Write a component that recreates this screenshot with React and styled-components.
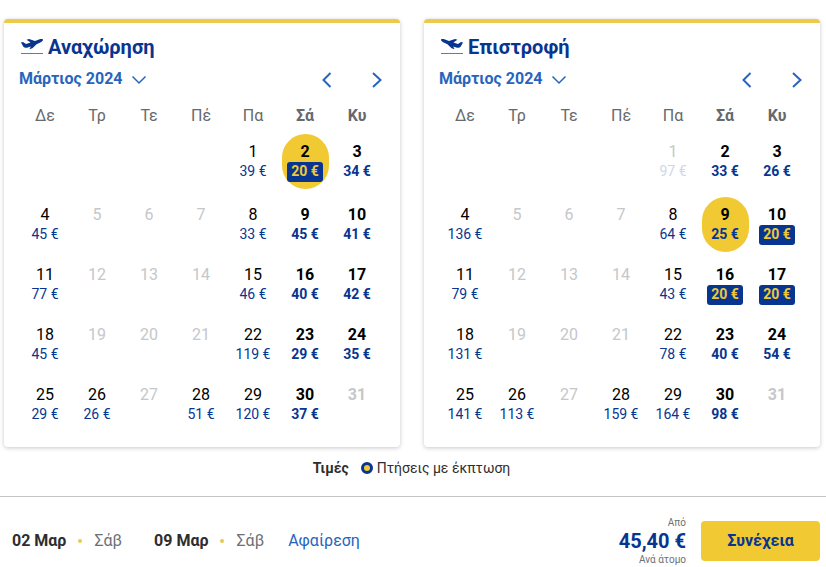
import React from "react";
import styled, { createGlobalStyle } from "styled-components";

const navy = "#073590";
const blue = "#2765bd";
const yellow = "#f1c933";

const GlobalStyle = createGlobalStyle`
  *, *::before, *::after { box-sizing: border-box; }
  body {
    margin: 0;
    background: #fff;
    color: #2e2e2e;
    font-family: Roboto, "Liberation Sans", sans-serif;
  }
  button { font-family: inherit; border: 0; padding: 0; background: none; cursor: pointer; }
`;

const Calendars = styled.div`
  display: grid;
  grid-template-columns: 1fr 1fr;
  gap: 24px;
  padding: 19px 6px 0 4px;
`;

const Card = styled.section`
  padding: 12px 17px 10px 15px;
  border-top: 4px solid #edca4a;
  border-radius: 4px;
  background: #fff;
  box-shadow: 0 1px 4px rgba(0, 0, 0, 0.22);
`;

const Heading = styled.h2`
  display: flex;
  align-items: center;
  gap: 5px;
  margin: 0;
  padding-left: 2px;
  font-size: 20px;
  line-height: 24px;
  font-weight: 700;
  color: ${navy};
`;

const MonthBar = styled.div`
  display: flex;
  align-items: center;
  justify-content: space-between;
  height: 40px;
`;

const MonthButton = styled.button`
  display: flex;
  align-items: center;
  gap: 8px;
  font-size: 16px;
  line-height: 24px;
  font-weight: 700;
  color: ${blue};
`;

const Arrows = styled.div`
  display: flex;
  gap: 34px;
  padding-top: 2px;
`;

const ArrowButton = styled.button`
  display: flex;
  width: 16px;
  height: 16px;
  color: ${blue};
`;

const Month = styled.table`
  width: 100%;
  table-layout: fixed;
  border-collapse: collapse;
`;

const Weekday = styled.th`
  height: 35px;
  padding: 0 0 1px;
  vertical-align: middle;
  font-size: 16px;
  line-height: 24px;
  font-weight: ${(p) => (p.$weekend ? 700 : 400)};
  color: #66696d;
`;

const Cell = styled.td`
  height: ${(p) => (p.$first ? 63 : 60)}px;
  padding: 0;
  text-align: center;
  vertical-align: top;
`;

const DayButton = styled.button`
  display: inline-flex;
  flex-direction: column;
  align-items: center;
  width: 47px;
  height: 55px;
  padding-top: 8px;
  border-radius: 24px;
  background: ${(p) => (p.$selected ? yellow : "transparent")};
  font-size: 16px;
  line-height: 20px;
  font-weight: ${(p) => (p.$weekend ? 700 : 400)};
  color: #000;
  &:disabled { color: #c5c7ca; cursor: default; }
`;

const Price = styled.span`
  padding: 0 4px 2px;
  border-radius: 3px;
  font-size: 14px;
  line-height: 18px;
  white-space: nowrap;
  background: ${(p) => (p.$deal ? navy : "transparent")};
  color: ${(p) => (p.$deal ? yellow : navy)};
  button:disabled & { color: #cdd7e9; }
`;

const Legend = styled.div`
  display: flex;
  justify-content: center;
  align-items: center;
  gap: 12px;
  padding: 11px 3px 18px 0;
  font-size: 14px;
  line-height: 20px;
`;

const LegendItem = styled.span`
  display: flex;
  align-items: center;
  gap: 4px;
`;

const DealDot = styled.span`
  width: 12px;
  height: 12px;
  border: 3px solid ${navy};
  border-radius: 50%;
  background: ${yellow};
`;

const Footer = styled.footer`
  display: flex;
  align-items: center;
  justify-content: space-between;
  padding: 18px 6px 0 12px;
  border-top: 1px solid #c4c4c4;
`;

const Trip = styled.div`
  display: flex;
  align-items: center;
  font-size: 16px;
  line-height: 24px;
`;

const TripDate = styled.div`
  display: flex;
  align-items: center;
  gap: 12px;
  margin-right: ${(p) => (p.$last ? 24 : 32)}px;
  color: #6b7076;
  strong { color: #2e2e2e; }
`;

const Bullet = styled.span`
  width: 4px;
  height: 4px;
  border-radius: 50%;
  background: #e5cb4d;
`;

const RemoveLink = styled.a`
  color: ${blue};
  text-decoration: none;
`;

const Checkout = styled.div`
  display: flex;
  align-items: center;
  gap: 15px;
`;

const Total = styled.div`
  display: flex;
  flex-direction: column;
  align-items: flex-end;
  padding-top: 2px;
  font-size: 10px;
  line-height: 12px;
  color: #6b7076;
  strong { font-size: 20px; line-height: 25px; color: ${navy}; }
`;

const Continue = styled.button`
  width: 119px;
  height: 40px;
  border-radius: 4px;
  background: ${yellow};
  font-size: 16px;
  line-height: 24px;
  font-weight: 700;
  color: ${navy};
`;

function Chevron({ direction }) {
  const paths = {
    down: "M1.5 5.5 L8 12 L14.5 5.5",
    left: "M13.5 1 L6.5 8 L13.5 15",
    right: "M6 1 L13.5 8 L6 15",
  };
  return (
    <svg width="16" height="16" viewBox="0 0 16 16" fill="none" aria-hidden="true">
      <path d={paths[direction]} stroke="currentColor" strokeWidth={direction === "down" ? 1.5 : 2} />
    </svg>
  );
}

function Plane({ landing }) {
  return (
    <svg width="22" height="18" viewBox="0 0 22 18" aria-hidden="true">
      <g transform={landing ? "translate(22 0) scale(-1 1)" : undefined}>
        <path
          fill="currentColor"
          d="M0 4.6 L2 4.1 L5 6 L9.6 4.5 L5.6 1.7 L8 .9 L14 2.9 L18 1.4 C19.8 .8 21.8 .8 22 1.6 C22.2 2.8 20.8 3.7 19.3 4.5 L15.6 6.2 L11.4 10.3 L8.4 11.2 L9.8 8.5 L6 9.7 C4.4 10.1 3.4 9.8 2.4 8.8 Z"
        />
      </g>
      <path d="M0 15.5 H22" stroke="#5f7da6" strokeWidth="1" />
    </svg>
  );
}

const weekdays = ["Δε", "Τρ", "Τε", "Πέ", "Πα", "Σά", "Κυ"];

const outbound = {
  title: "Αναχώρηση",
  selected: 2,
  prices: {
    1: 39, 2: 20, 3: 34, 4: 45, 8: 33, 9: 45, 10: 41, 11: 77, 15: 46, 16: 40, 17: 42,
    18: 45, 22: 119, 23: 29, 24: 35, 25: 29, 26: 26, 28: 51, 29: 120, 30: 37,
  },
  soldOut: [],
};

const inbound = {
  title: "Επιστροφή",
  landing: true,
  selected: 9,
  prices: {
    1: 97, 2: 33, 3: 26, 4: 136, 8: 64, 9: 25, 10: 20, 11: 79, 15: 43, 16: 20, 17: 20,
    18: 131, 22: 78, 23: 40, 24: 54, 25: 141, 26: 113, 28: 159, 29: 164, 30: 98,
  },
  soldOut: [1],
};

const weeks = [0, 1, 2, 3, 4].map((w) =>
  weekdays.map((_, d) => w * 7 + d - 3)
);

function Calendar({ data }) {
  return (
    <Card>
      <Heading>
        <Plane landing={data.landing} />
        {data.title}
      </Heading>
      <MonthBar>
        <MonthButton type="button">
          Μάρτιος 2024
          <Chevron direction="down" />
        </MonthButton>
        <Arrows>
          <ArrowButton type="button" aria-label="Προηγούμενος μήνας"><Chevron direction="left" /></ArrowButton>
          <ArrowButton type="button" aria-label="Επόμενος μήνας"><Chevron direction="right" /></ArrowButton>
        </Arrows>
      </MonthBar>
      <Month>
        <thead>
          <tr>
            {weekdays.map((name, i) => (
              <Weekday key={name} scope="col" $weekend={i > 4}>{name}</Weekday>
            ))}
          </tr>
        </thead>
        <tbody>
          {weeks.map((week, w) => (
            <tr key={w}>
              {week.map((day, d) => {
                const price = data.prices[day];
                return (
                  <Cell key={d} $first={w === 0}>
                    {day > 0 && (
                      <DayButton
                        type="button"
                        disabled={!price || data.soldOut.includes(day)}
                        aria-pressed={day === data.selected}
                        $selected={day === data.selected}
                        $weekend={d > 4}
                      >
                        {day}
                        {price && <Price $deal={price === 20}>{price} €</Price>}
                      </DayButton>
                    )}
                  </Cell>
                );
              })}
            </tr>
          ))}
        </tbody>
      </Month>
    </Card>
  );
}

export default function App() {
  return (
    <>
      <GlobalStyle />
      <main>
        <Calendars>
          <Calendar data={outbound} />
          <Calendar data={inbound} />
        </Calendars>
        <Legend>
          <strong>Τιμές</strong>
          <LegendItem><DealDot />Πτήσεις με έκπτωση</LegendItem>
        </Legend>
      </main>
      <Footer>
        <Trip>
          <TripDate><strong>02 Μαρ</strong><Bullet />Σάβ</TripDate>
          <TripDate $last><strong>09 Μαρ</strong><Bullet />Σάβ</TripDate>
          <RemoveLink href="#remove">Αφαίρεση</RemoveLink>
        </Trip>
        <Checkout>
          <Total>
            <span>Από</span>
            <strong>45,40 €</strong>
            <span>Ανά άτομο</span>
          </Total>
          <Continue type="button">Συνέχεια</Continue>
        </Checkout>
      </Footer>
    </>
  );
}
